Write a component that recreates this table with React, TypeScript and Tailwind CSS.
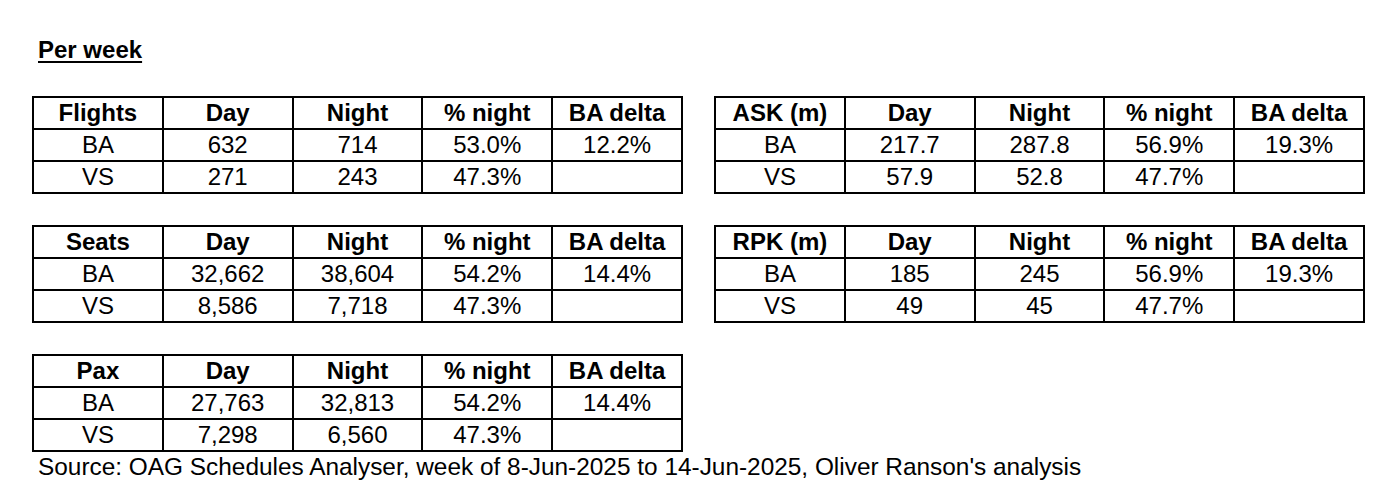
type Table = {
  title: string;
  rows: string[][];
};

const cols = ["Day", "Night", "% night", "BA delta"];

const tables: Table[] = [
  {
    title: "Flights",
    rows: [
      ["BA", "632", "714", "53.0%", "12.2%"],
      ["VS", "271", "243", "47.3%", ""],
    ],
  },
  {
    title: "ASK (m)",
    rows: [
      ["BA", "217.7", "287.8", "56.9%", "19.3%"],
      ["VS", "57.9", "52.8", "47.7%", ""],
    ],
  },
  {
    title: "Seats",
    rows: [
      ["BA", "32,662", "38,604", "54.2%", "14.4%"],
      ["VS", "8,586", "7,718", "47.3%", ""],
    ],
  },
  {
    title: "RPK (m)",
    rows: [
      ["BA", "185", "245", "56.9%", "19.3%"],
      ["VS", "49", "45", "47.7%", ""],
    ],
  },
  {
    title: "Pax",
    rows: [
      ["BA", "27,763", "32,813", "54.2%", "14.4%"],
      ["VS", "7,298", "6,560", "47.3%", ""],
    ],
  },
];

function StatTable({ t }: { t: Table }) {
  return (
    <table className="w-[651px] table-fixed border-collapse border-2 border-black">
      <thead>
        <tr>
          {[t.title, ...cols].map((c) => (
            <th
              key={c}
              className="h-[32px] border-2 border-black p-0 text-center font-bold leading-none"
            >
              {c}
            </th>
          ))}
        </tr>
      </thead>
      <tbody>
        {t.rows.map((r, i) => (
          <tr key={i}>
            {r.map((v, j) => (
              <td
                key={j}
                className="h-[32px] border-2 border-black p-0 text-center leading-none"
              >
                {v}
              </td>
            ))}
          </tr>
        ))}
      </tbody>
    </table>
  );
}

export default function App() {
  return (
    <div className="h-[482px] w-[1398px] bg-white pl-[32px] pt-[36px] font-['Liberation_Sans',Arial,sans-serif] text-[24px] text-black">
      <h2 className="ml-[6px] text-[24px] font-bold leading-[27px] underline underline-offset-[3px]">
        Per week
      </h2>
      <div className="mt-[33px] grid w-[1333px] grid-cols-[651px_651px] gap-x-[31px] gap-y-[31px]">
        {tables.map((t) => (
          <StatTable key={t.title} t={t} />
        ))}
      </div>
      <p className="ml-[6px] mt-[2px] text-[24.4px] leading-[26px]">
        Source: OAG Schedules Analyser, week of 8-Jun-2025 to 14-Jun-2025, Oliver Ranson's analysis
      </p>
    </div>
  );
}
